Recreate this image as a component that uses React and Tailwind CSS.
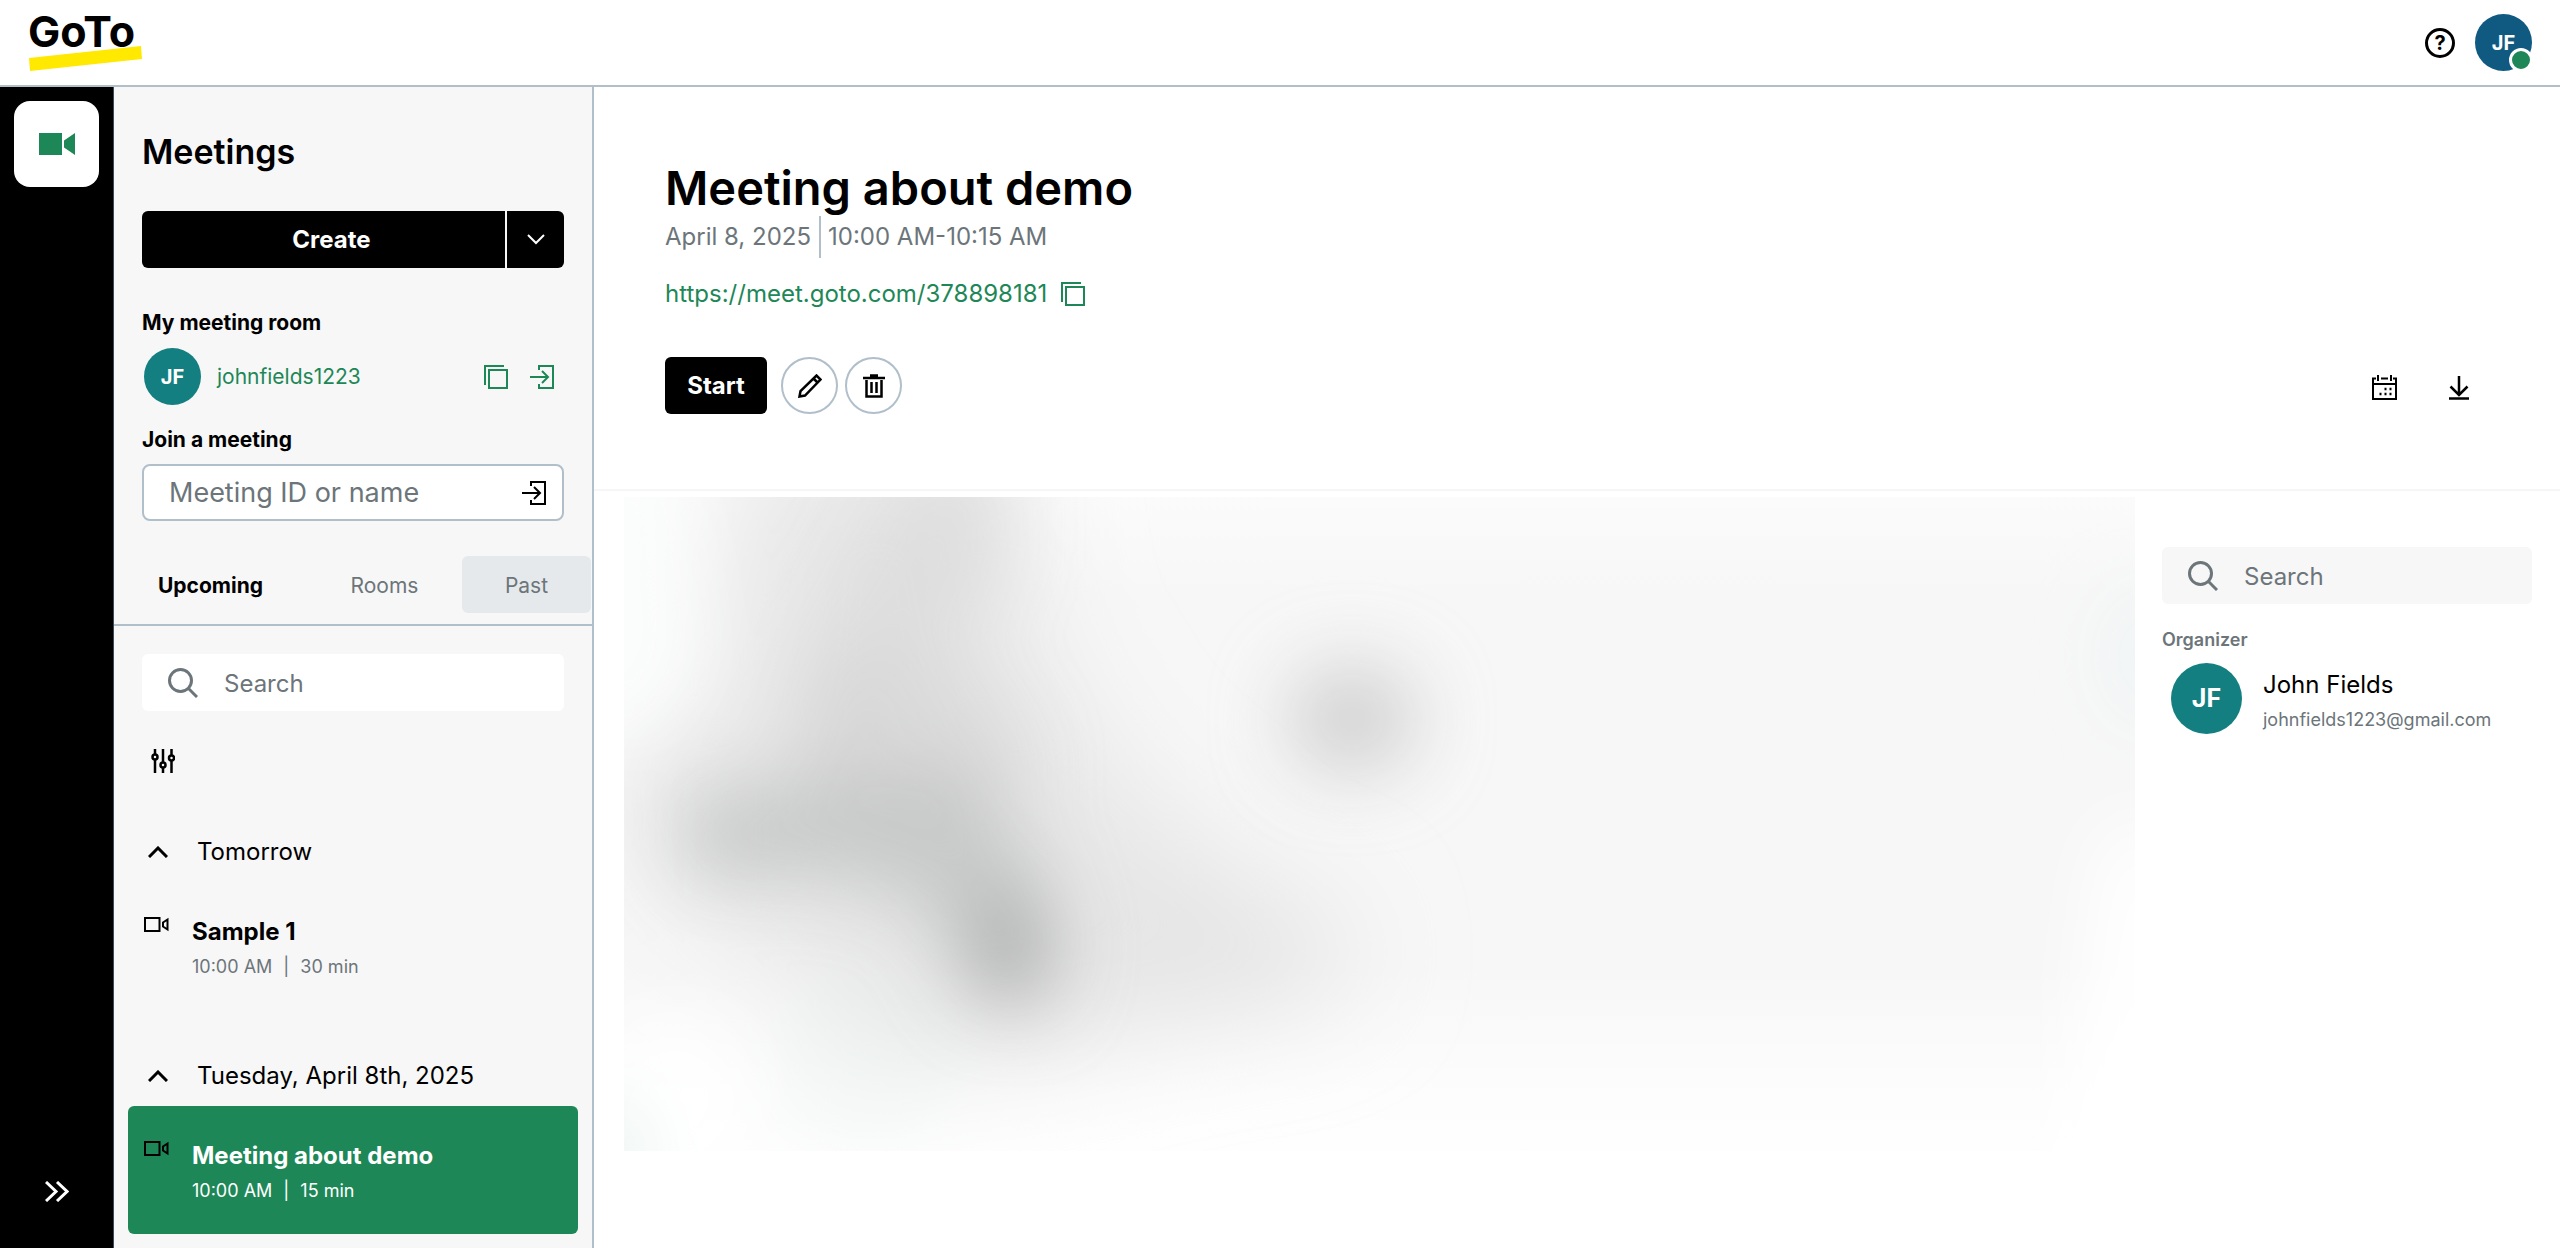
import { useState } from "react";

const meetingGroups = [
  {
    label: "Tomorrow",
    meetings: [{ id: 1, title: "Sample 1", time: "10:00 AM", length: "30 min" }],
  },
  {
    label: "Tuesday, April 8th, 2025",
    meetings: [
      { id: 2, title: "Meeting about demo", time: "10:00 AM", length: "15 min" },
    ],
  },
];

const Logo = () => (
  <svg width="120" height="80" viewBox="0 -8 120 80" aria-label="GoTo">
    <path d="M0 47 112 35l1 13L1 60z" fill="#ffe900" />
    <text
      x="-1"
      y="36"
      fontFamily="Inter, sans-serif"
      fontWeight="700"
      fontSize="43"
    >
      GoTo
    </text>
  </svg>
);

const CopyIcon = () => (
  <svg width="24" height="24" viewBox="0 0 24 24" fill="none" stroke="currentColor" strokeWidth="2">
    <path d="M5 5h18v18H5z" />
    <path d="M1 20V1h19" />
  </svg>
);

const EnterIcon = () => (
  <svg width="24" height="24" viewBox="0 0 24 24" fill="none" stroke="currentColor" strokeWidth="2">
    <path d="M9 5V1h14v22H9v-4" />
    <path d="M0 12h18M12 6l6 6-6 6" />
  </svg>
);

const SearchIcon = () => (
  <svg width="30" height="30" viewBox="0 0 30 30" fill="none" stroke="#6c757a" strokeWidth="3">
    <circle cx="12.500" cy="12.500" r="11" />
    <path d="m20 20 9 9" />
  </svg>
);

const CameraIcon = () => (
  <svg width="25" height="15" viewBox="0 0 25 15" fill="none" stroke="#000" strokeWidth="2" className="shrink-0">
    <path d="M1 1h14.500v13H1z" />
    <path d="M23.500 2.500v10l-4.500-3v-4z" />
  </svg>
);

const ChevronUp = () => (
  <svg width="20" height="12" viewBox="0 0 20 12" fill="none" stroke="currentColor" strokeWidth="3">
    <path d="m1 11 9-9 9 9" />
  </svg>
);

const SearchBox = ({ id, className }) => (
  <div className={`flex h-[57px] items-center gap-[26px] rounded-md pl-[26px] ${className}`}>
    <label htmlFor={id} aria-label="Search">
      <SearchIcon />
    </label>
    <input
      id={id}
      type="text"
      placeholder="Search"
      className="min-w-0 flex-1 bg-transparent pt-[2px] text-[24px] outline-none placeholder:text-[#6c757a]"
    />
  </div>
);

const Header = () => (
  <header className="flex h-[87px] items-center justify-between border-b-2 border-[#b0bfca] bg-white pr-7 pl-[29px]">
    <a href="#home">
      <Logo />
    </a>
    <div className="flex items-center gap-5">
      <button
        aria-label="Help"
        className="flex size-[30px] items-center justify-center rounded-full border-[3px] border-black text-[20px] leading-none font-bold"
      >
        ?
      </button>
      <button className="relative flex size-[57px] items-center justify-center rounded-full bg-[#105a82] text-[20px] font-bold text-white">
        JF
        <span className="absolute -right-px -bottom-px size-[24px] rounded-full border-[3px] border-white bg-[#1e8757]" />
      </button>
    </div>
  </header>
);

const Rail = () => (
  <nav className="flex w-[114px] shrink-0 flex-col items-center justify-between border-r border-[#3d4c5a] bg-black pt-[14px] pb-[46px]">
    <button aria-label="Meetings" className="flex h-[86px] w-[85px] items-center justify-center rounded-2xl bg-white">
      <svg width="36" height="22" viewBox="0 0 36 22" fill="#1e8757">
        <path d="M0 0h23v22H0zM25 7.500 36 0v22l-11-7.500z" />
      </svg>
    </button>
    <button aria-label="Expand">
      <svg width="24" height="21" viewBox="0 0 24 21" fill="none" stroke="#fff" strokeWidth="3">
        <path d="m1 1 10 9.500L1 20M12 1l10 9.500L12 20" />
      </svg>
    </button>
  </nav>
);

const MeetingItem = ({ meeting, selected, onSelect }) => (
  <button
    onClick={onSelect}
    className={`flex h-32 w-full gap-[23px] rounded-md pt-[33px] pl-4 text-left ${
      selected ? "bg-[#1e8757] text-white" : "text-black"
    }`}
  >
    <span className="pt-[2px]">
      <CameraIcon />
    </span>
    <span className="flex flex-col gap-[6px]">
      <span className="text-[24px] leading-[34px] font-bold">{meeting.title}</span>
      <span
        className={`flex gap-[11px] text-[18px] leading-6 ${
          selected ? "text-white" : "text-[#6c757a]"
        }`}
      >
        <span>{meeting.time}</span>
        <span>|</span>
        <span>{meeting.length}</span>
      </span>
    </span>
  </button>
);

const Sidebar = () => {
  const [selected, setSelected] = useState(2);

  return (
    <aside className="w-[480px] shrink-0 border-r-2 border-[#b0bfca] bg-[#f7f7f7] pt-[43px] pb-[14px]">
      <div className="px-7">
        <h1 className="text-[34px] leading-[44px] font-semibold">Meetings</h1>
        <div className="mt-[37px] flex h-[57px] gap-[2px] overflow-hidden rounded-md text-white">
          <button className="flex-1 bg-black pl-4 text-[24px] font-bold">Create</button>
          <button aria-label="More options" className="flex w-[57px] items-center justify-center bg-black">
            <svg width="18" height="11" viewBox="0 0 18 11" fill="none" stroke="currentColor" strokeWidth="2">
              <path d="m1 1 8 8 8-8" />
            </svg>
          </button>
        </div>

        <h2 className="mt-[41px] text-[21px] leading-7 font-bold">My meeting room</h2>
        <div className="mt-[11px] flex items-center pr-[10px] pl-[2px] text-[#1e8757]">
          <span className="flex size-[57px] items-center justify-center rounded-full bg-[#147f80] text-[20px] font-bold text-white">
            JF
          </span>
          <a href="#room" className="ml-4 flex-1 text-[21px]">
            johnfields1223
          </a>
          <div className="flex gap-[22px]">
            <button aria-label="Copy link">
              <CopyIcon />
            </button>
            <button aria-label="Enter room">
              <EnterIcon />
            </button>
          </div>
        </div>

        <label htmlFor="meeting-id" className="mt-[21px] block text-[21px] leading-7 font-bold">
          Join a meeting
        </label>
        <div className="mt-[10px] flex h-[57px] items-center rounded-lg border-2 border-[#b0bfca] bg-white pr-4 pl-[25px]">
          <input
            id="meeting-id"
            type="text"
            placeholder="Meeting ID or name"
            className="min-w-0 flex-1 bg-transparent pt-[2px] text-[27px] outline-none placeholder:text-[#6c757a]"
          />
          <button aria-label="Join">
            <EnterIcon />
          </button>
        </div>
      </div>

      <div className="mt-[35px] flex h-[70px] items-start border-b-2 border-[#b0bfca] text-[21px]">
        <button className="h-[57px] w-[193px] pt-[2px] font-bold">Upcoming</button>
        <button className="h-[57px] w-[155px] pt-[2px] text-[#6c757a]">Rooms</button>
        <button className="h-[57px] w-[129px] rounded-md bg-[#e5e9ec] pt-[2px] text-[#6c757a]">Past</button>
      </div>

      <div className="px-7">
        <SearchBox id="search-meetings" className="mt-7 bg-white" />
        <button aria-label="Filters" className="mt-[38px] ml-[9px] block">
          <svg width="24" height="24" viewBox="0 0 24 24" fill="none" stroke="#000" strokeWidth="2.500">
            <path d="M4 0v5M4 11v13M12 0v13M12 19v5M20.500 0v6M20.500 12v12" />
            <circle cx="4" cy="8" r="2.500" />
            <circle cx="12" cy="16" r="2.500" />
            <circle cx="20.500" cy="9" r="2.500" />
          </svg>
        </button>
      </div>

      <div className="mt-[63px] flex flex-col gap-[50px] px-[14px]">
        {meetingGroups.map((group) => (
          <section key={group.label}>
            <button className="flex items-center gap-[29px] pl-5 text-[24px] leading-8">
              <ChevronUp />
              {group.label}
            </button>
            <div className="mt-[14px]">
              {group.meetings.map((meeting) => (
                <MeetingItem
                  key={meeting.id}
                  meeting={meeting}
                  selected={meeting.id === selected}
                  onSelect={() => setSelected(meeting.id)}
                />
              ))}
            </div>
          </section>
        ))}
      </div>
    </aside>
  );
};

const BlurredContent = () => (
  <svg
    viewBox="0 0 1511 654"
    preserveAspectRatio="none"
    className="h-[654px] min-w-0 flex-1"
    aria-hidden="true"
  >
    <defs>
      <linearGradient id="fade" x1="0" y1="0" x2="0" y2="1">
        <stop offset="0" stopColor="#fbfbfb" />
        <stop offset="0.150" stopColor="#f7f7f7" />
        <stop offset="0.720" stopColor="#f7f7f7" />
        <stop offset="0.920" stopColor="#fdfdfd" />
        <stop offset="1" stopColor="#fefefe" />
      </linearGradient>
      <filter id="soft" x="-100%" y="-100%" width="300%" height="300%">
        <feGaussianBlur stdDeviation="36" />
      </filter>
      <filter id="softer" x="-100%" y="-100%" width="300%" height="300%">
        <feGaussianBlur stdDeviation="55" />
      </filter>
    </defs>
    <rect width="1511" height="654" fill="url(#fade)" />
    <g filter="url(#softer)">
      <path d="M120-60h260l30 200 80 130 130 110-20 130-220 60-160-60-170-120-60-110 110-90z" fill="#e7e7e7" />
      <ellipse cx="600" cy="455" rx="130" ry="60" fill="#e4e4e4" />
      <ellipse cx="240" cy="570" rx="80" ry="50" fill="#ecf3f0" />
    </g>
    <g filter="url(#soft)">
      <path d="M290-40h90v110l-60 90-110 120h-50l30-140z" fill="#d6d6d6" opacity="0.500" />
      <path d="M190 170h160l60 90-30 60-200-20z" fill="#cfd1d0" opacity="0.550" />
      <path d="M60 300l150-20 130-10 70 90 30 90-20 60-70-10-50-90-90-30-150 0z" fill="#bcbebd" opacity="0.700" />
      <ellipse cx="384" cy="450" rx="36" ry="60" fill="#9fa2a0" opacity="0.600" />
      <ellipse cx="728" cy="222" rx="66" ry="56" fill="#cdcdcd" opacity="0.850" />
      <path d="M-80-80H30l30 140 10 120-60 60H-80z" fill="#fbfdfc" />
      <ellipse cx="50" cy="600" rx="80" ry="80" fill="#fff" opacity="0.800" />
      <path d="M1480 330h80v400h-180l60-90z" fill="#fff" />
      <ellipse cx="1530" cy="160" rx="40" ry="60" fill="#edf4f5" />
      <ellipse cx="-10" cy="654" rx="20" ry="50" fill="#d8e8e3" />
    </g>
  </svg>
);

const Attendees = () => (
  <div className="mt-[50px] w-[370px] shrink-0">
    <SearchBox id="search-attendees" className="bg-[#f7f7f7]" />
    <h3 className="mt-6 text-[18px] leading-6 font-semibold text-[#6c757a]">Organizer</h3>
    <div className="mt-[11px] flex gap-[21px] pl-[9px]">
      <span className="flex size-[71px] items-center justify-center rounded-full bg-[#147f80] text-[25px] font-bold text-white">
        JF
      </span>
      <div className="pt-[5px]">
        <p className="text-[24px] leading-[34px]">John Fields</p>
        <p className="text-[18px] leading-9 text-[#6c757a]">johnfields1223@gmail.com</p>
      </div>
    </div>
  </div>
);

const MeetingDetails = () => (
  <main className="min-w-0 flex-1 bg-white">
    <div className="border-b-2 border-[#f6f6f6] pt-[73px] pr-[91px] pb-[75px] pl-[71px]">
      <h2 className="text-[47px] leading-[56px] font-semibold">Meeting about demo</h2>
      <div className="flex text-[24px] leading-[42px] text-[#6c757a]">
        <span className="border-r-2 border-[#b0bfca] pr-2">April 8, 2025</span>
        <span className="pl-[7px]">10:00 AM-10:15 AM</span>
      </div>
      <div className="mt-5 flex items-center gap-[14px] text-[24px] leading-8 text-[#1e8757]">
        <a href="#meeting">https://meet.goto.com/378898181</a>
        <button aria-label="Copy meeting link">
          <CopyIcon />
        </button>
      </div>
      <div className="mt-[47px] flex items-center justify-between">
        <div className="flex">
          <button className="h-[57px] w-[102px] rounded-md bg-black text-[24px] font-bold text-white">
            Start
          </button>
          <button aria-label="Edit" className="ml-[14px] flex size-[57px] items-center justify-center rounded-full border-2 border-[#b0bfca]">
            <svg width="24" height="24" viewBox="0 0 24 24" fill="none" stroke="#000" strokeWidth="2.500">
              <path d="m1.500 22.500 1-5.500L18.500 1.500l4 4L7 21.500zM15.500 4.500l4 4" />
            </svg>
          </button>
          <button aria-label="Delete" className="ml-[7px] flex size-[57px] items-center justify-center rounded-full border-2 border-[#b0bfca]">
            <svg width="22" height="24" viewBox="0 0 22 24" fill="none" stroke="#000" strokeWidth="2.500">
              <path d="M0 4h22M7 1.500h8M3.500 6v16.500h15V6M8.500 8v11M13.500 8v11" />
            </svg>
          </button>
        </div>
        <div className="flex gap-[52px] pt-1">
          <button aria-label="Add to calendar">
            <svg width="25" height="25" viewBox="0 0 25 25" fill="none" stroke="#000" strokeWidth="2">
              <path d="M4 3.500H1V24h23V3.500h-3M9 3.500h7M1 9h23M6 0v6M19 0v6" />
              <path d="M12.500 14h2M17.500 14h2M7.500 19h2M12.500 19h2M17.500 19h2" strokeWidth="2.500" />
            </svg>
          </button>
          <button aria-label="Download">
            <svg width="20" height="24" viewBox="0 0 20 24" fill="none" stroke="#000" strokeWidth="2.500">
              <path d="M10 0v19M1.500 10.500 10 19l8.500-8.500M0 22.500h20" />
            </svg>
          </button>
        </div>
      </div>
    </div>
    <div className="flex items-start gap-[27px] pt-[6px] pr-7 pl-[30px]">
      <BlurredContent />
      <Attendees />
    </div>
  </main>
);

const App = () => {
  return (
    <div className="flex min-h-screen flex-col bg-white font-[Inter,sans-serif] text-black">
      <Header />
      <div className="flex flex-1">
        <Rail />
        <Sidebar />
        <MeetingDetails />
      </div>
    </div>
  );
};

export default App;
